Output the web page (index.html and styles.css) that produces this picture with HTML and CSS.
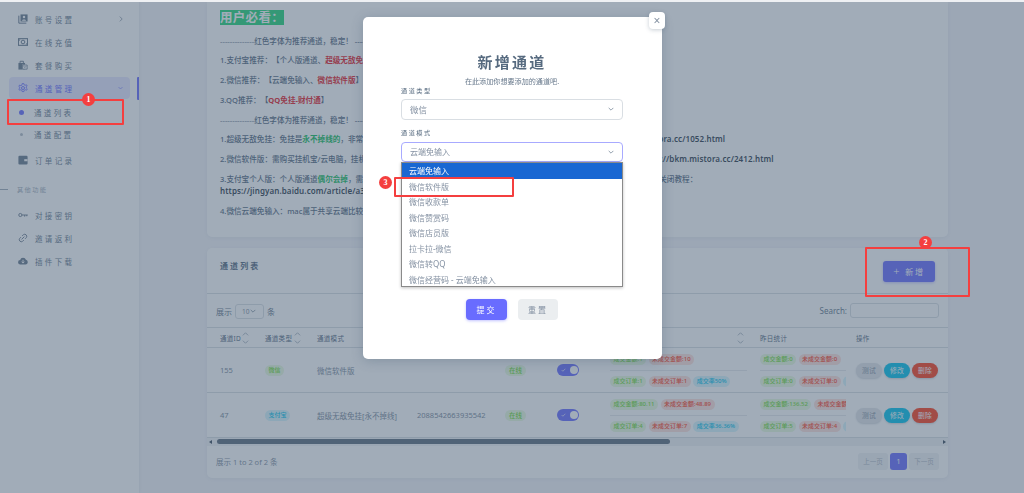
FILE: index.html
```html
<!DOCTYPE html>
<html lang="zh-CN">
<head>
<meta charset="utf-8">
<title>通道列表</title>
<link rel="stylesheet" href="styles.css">
</head>
<body>
<svg class="defs" width="0" height="0" aria-hidden="true">
  <symbol id="chev" viewBox="0 0 10 6"><path d="M1 1l4 4 4-4" fill="none" stroke="currentColor" stroke-width="1.2"/></symbol>
  <symbol id="sort" viewBox="0 0 8 16"><path d="M1 5l3-3 3 3M1 11l3 3 3-3" fill="none" stroke="currentColor" stroke-width="1"/></symbol>
</svg>
<div class="page">
  <div class="shell">
    <aside class="side">
      <a class="item">
        <svg class="ico" viewBox="0 0 12 12"><path d="M1 2v9h9" fill="none" stroke="currentColor" stroke-width="1.2"/><path d="M3 0.5h8.500v8.500H3z" fill="currentColor"/><circle cx="7.200" cy="3.600" r="1.500" fill="#fff"/><path d="M4.800 8c0-1.800 4.800-1.800 4.800 0z" fill="#fff"/></svg>
        <span class="lbl">账号设置</span>
        <svg class="arrow" viewBox="0 0 6 10"><path d="M1 1l4 4-4 4" fill="none" stroke="currentColor" stroke-width="1.100"/></svg>
      </a>
      <a class="item">
        <svg class="ico" viewBox="0 0 12 12"><rect x="0.500" y="2" width="11" height="8" fill="none" stroke="currentColor" stroke-width="1.300"/><circle cx="6" cy="6" r="2.200" fill="none" stroke="currentColor" stroke-width="1.200"/><path d="M1 3h2L1 5zM11 9H9l2-2z" fill="currentColor"/></svg>
        <span class="lbl">在线充值</span>
      </a>
      <a class="item">
        <svg class="ico" viewBox="0 0 12 12"><path d="M0.500 3.500h8v8h-8z" fill="currentColor"/><path d="M2.500 3.500V1.500h4v2" fill="none" stroke="currentColor" stroke-width="1.100"/><path d="M5 5.500h6.500v6H5z" fill="#fff"/><path d="M5.500 6h5.500v5H5.500zM7 7.500l1.200 1.500 1.500-1.500" fill="none" stroke="currentColor" stroke-width="0.900"/></svg>
        <span class="lbl">套餐购买</span>
      </a>
      <a class="item active">
        <svg class="ico" viewBox="0 0 12 12"><circle cx="6" cy="6" r="1.800" fill="none" stroke="currentColor" stroke-width="1.100"/><path d="M5 0.700h2l.3 1.500 1.300.6 1.400-.8 1 1.700-1.200 1 .1 1.400 1.200 1-1 1.700-1.400-.8-1.300.8-.3 1.500H5l-.3-1.500-1.300-.8-1.400.8-1-1.700 1.200-1V5.100l-1.200-1 1-1.700 1.400.8 1.300-.6z" fill="none" stroke="currentColor" stroke-width="1"/></svg>
        <span class="lbl">通道管理</span>
        <svg class="arrow down" viewBox="0 0 10 6"><path d="M1 1l4 4 4-4" fill="none" stroke="currentColor" stroke-width="1.100"/></svg>
      </a>
      <a class="sub on"><i class="dot"></i><span class="lbl">通道列表</span></a>
      <a class="sub"><i class="dot"></i><span class="lbl">通道配置</span></a>
      <a class="item order">
        <svg class="ico" viewBox="0 0 12 12"><rect x="0.500" y="1" width="11" height="10.500" rx="1.300" fill="currentColor"/><rect x="7.500" y="5" width="4" height="2.500" fill="#fff"/></svg>
        <span class="lbl">订单记录</span>
      </a>
      <div class="section"><i class="rule"></i><span>其他功能</span></div>
      <a class="item">
        <svg class="ico" viewBox="0 0 12 12"><circle cx="2.800" cy="6" r="1.900" fill="none" stroke="currentColor" stroke-width="1.100"/><path d="M4.700 6h7M8 6v2M10.500 6v1.500" fill="none" stroke="currentColor" stroke-width="1.100"/></svg>
        <span class="lbl">对接密钥</span>
      </a>
      <a class="item">
        <svg class="ico" viewBox="0 0 12 12"><path d="M5 3.500l1.500-1.500a2.500 2.500 0 0 1 3.500 3.500L8.500 7M7 8.500L5.500 10A2.500 2.500 0 0 1 2 6.500L3.500 5M4.300 7.700l3.400-3.400" fill="none" stroke="currentColor" stroke-width="1.100"/></svg>
        <span class="lbl">邀请返利</span>
      </a>
      <a class="item">
        <svg class="ico" viewBox="0 0 12 12"><path d="M3 10.300a2.700 2.700 0 0 1-.4-5.400 3.600 3.600 0 0 1 6.900-.3A2.900 2.900 0 0 1 9 10.300z" fill="currentColor"/><path d="M6 4.500v3.800M4.300 6.800L6 8.500l1.700-1.700" fill="none" stroke="#fff" stroke-width="1.100"/></svg>
        <span class="lbl">插件下载</span>
      </a>
    </aside>
    <i class="side-mark"></i>

    <main class="main">
      <section class="card notice">
        <h2 class="must"><span>用户必看：</span></h2>
        <p class="note"><span class="dash">--------------</span>红色字体为推荐通道，稳定！ --------------</p>
        <p class="note">1.支付宝推荐：【个人版通道、<b class="red">超级无敌免挂</b>】</p>
        <p class="note">2.微信推荐：【云端免输入、<b class="red">微信软件版</b>】</p>
        <p class="note">3.QQ推荐：【<b class="red">QQ免挂-财付通</b>】</p>
        <p class="note"><span class="dash">--------------</span>红色字体为推荐通道，稳定！ --------------</p>
        <p class="note">1.超级无敌免挂：免挂是<b class="green">永不掉线的</b>，非常稳定，推荐优先使用，掉线后也无需重新登录，配置教程请看这里：<b class="url">https://bkm.mistora.cc/1052.html</b></p>
        <p class="note">2.微信软件版：需购买挂机宝/云电脑，挂机软件长期在线运行，收款回调速度快且稳定，适合大量订单，配置教程请看这里：<b class="url">https://bkm.mistora.cc/2412.html</b></p>
        <p class="note tight">3.支付宝个人版：个人版通道<b class="green">偶尔会掉</b>，需要关闭支付宝的相关安全设置，防止掉线，如遇到掉线请重新登录账号后再试一次即可，关闭教程：<br><b class="url">https://jingyan.baidu.com/article/a3</b></p>
        <p class="note">4.微信云端免输入：mac属于共享云端比较稳定</p>
      </section>

      <section class="card list">
        <header class="list-head">
          <h3>通道列表</h3>
          <button class="btn-add"><span class="plus">+</span> 新增</button>
        </header>
        <div class="filters">
          <div class="len"><span>展示</span><span class="len-sel">10<svg class="chev" viewBox="0 0 10 6"><use href="#chev"/></svg></span><span>条</span></div>
          <div class="search"><span>Search:</span><i class="search-box"></i></div>
        </div>
        <div class="tbl-wrap">
          <table class="tbl">
            <colgroup>
              <col class="c1"><col class="c2"><col class="c3"><col class="c4"><col class="c5"><col class="c6"><col class="c7"><col class="c8"><col class="c9">
            </colgroup>
            <thead>
              <tr>
                <th>通道ID<svg class="sort" viewBox="0 0 8 16"><use href="#sort"/></svg></th>
                <th>通道类型<svg class="sort" viewBox="0 0 8 16"><use href="#sort"/></svg></th>
                <th>通道模式</th>
                <th></th>
                <th></th>
                <th></th>
                <th class="sorted"><svg class="sort" viewBox="0 0 8 16"><use href="#sort"/></svg></th>
                <th>昨日统计</th>
                <th>操作</th>
              </tr>
            </thead>
            <tbody>
              <tr>
                <td>155</td>
                <td><span class="tag g">微信</span></td>
                <td>微信软件版</td>
                <td></td>
                <td><span class="tag g wide">在线</span></td>
                <td><span class="switch"><svg viewBox="0 0 8 6"><path d="M1 3l2 2 4-4" fill="none" stroke="currentColor" stroke-width="1"/></svg><i></i></span></td>
                <td class="stats">
                  <div class="sline"><span class="tag g">成交金额:1</span><span class="tag r">未成交金额:10</span></div>
                  <div class="sline"><span class="tag g">成交订单:1</span><span class="tag r">未成交订单:1</span><span class="tag b">成交率50%</span></div>
                </td>
                <td class="stats">
                  <div class="sline"><span class="tag g">成交金额:0</span><span class="tag r">未成交金额:0</span></div>
                  <div class="sline"><span class="tag g">成交订单:0</span><span class="tag r">未成交订单:0</span><span class="tag b">成交率0%</span></div>
                </td>
                <td class="ops"><span class="op t">测试</span><span class="op e">修改</span><span class="op d">删除</span></td>
              </tr>
              <tr>
                <td>47</td>
                <td><span class="tag b">支付宝</span></td>
                <td class="nowrap">超级无敌免挂[永不掉线]</td>
                <td>2088542663935542</td>
                <td><span class="tag g wide">在线</span></td>
                <td><span class="switch"><svg viewBox="0 0 8 6"><path d="M1 3l2 2 4-4" fill="none" stroke="currentColor" stroke-width="1"/></svg><i></i></span></td>
                <td class="stats">
                  <div class="sline"><span class="tag g">成交金额:80.11</span><span class="tag r">未成交金额:48.89</span></div>
                  <div class="sline"><span class="tag g">成交订单:4</span><span class="tag r">未成交订单:7</span><span class="tag b">成交率36.36%</span></div>
                </td>
                <td class="stats">
                  <div class="sline"><span class="tag g">成交金额:136.52</span><span class="tag r">未成交金额:33.48</span></div>
                  <div class="sline"><span class="tag g">成交订单:5</span><span class="tag r">未成交订单:4</span><span class="tag b">成交率55%</span></div>
                </td>
                <td class="ops"><span class="op t">测试</span><span class="op e">修改</span><span class="op d">删除</span></td>
              </tr>
            </tbody>
          </table>
          <div class="scroll"><i class="sl"></i><i class="thumb"></i><i class="sr"></i></div>
        </div>
        <footer class="list-foot">
          <span>展示 1 to 2 of 2 条</span>
          <div class="pager"><span class="pg">上一页</span><span class="pg cur">1</span><span class="pg">下一页</span></div>
        </footer>
      </section>
    </main>
  </div>

  <div class="backdrop"></div>

  <div class="modal">
    <button class="close">×</button>
    <h1 class="m-title">新增通道</h1>
    <p class="m-sub">在此添加你想要添加的通道吧.</p>
    <label class="m-label first">通道类型</label>
    <div class="sel"><span class="sel-one">微信</span><svg class="chev" viewBox="0 0 10 6"><use href="#chev"/></svg></div>
    <label class="m-label second">通道模式</label>
    <div class="field">
      <div class="sel focus"><span>云端免输入</span><svg class="chev" viewBox="0 0 10 6"><use href="#chev"/></svg></div>
      <ul class="drop">
        <li class="hl">云端免输入</li>
        <li>微信软件版</li>
        <li>微信收款单</li>
        <li>微信赞赏码</li>
        <li>微信店员版</li>
        <li>拉卡拉-微信</li>
        <li>微信转QQ</li>
        <li>微信经营码 - 云端免输入</li>
      </ul>
    </div>
    <div class="m-actions">
      <button class="m-btn ok">提交</button>
      <button class="m-btn reset">重置</button>
    </div>
  </div>

  <i class="mark m1"></i><b class="pin p1">1</b>
  <i class="mark m2"></i><b class="pin p2">2</b>
  <i class="mark m3"></i><b class="pin p3">3</b>
</div>
</body>
</html>
```

FILE: styles.css
```css
* { box-sizing: border-box; }
html, body { margin: 0; height: 100%; overflow: hidden; background: #eef0f3; }
body { font-family: "Noto Sans", "Noto Sans CJK SC", sans-serif; font-size: 8px; color: #697a8d; text-spacing-trim: space-all; }
.defs { position: absolute; }
h1, h2, h3, p, ul { margin: 0; padding: 0; }
a { display: flex; }
button { font-family: inherit; border: 0; padding: 0; }

.page { position: relative; height: 493px; width: 1024px; padding-top: 2px; overflow: hidden; filter: blur(0.45px); }
.shell { display: flex; height: 491px; background: #f5f5f9; overflow: hidden; position: relative; }

/* sidebar */
.side { width: 139px; flex: none; background: #fff; padding-top: 6px; box-shadow: 0 0 4px rgba(67,89,113,.1); }
.side-mark { position: absolute; left: 137px; top: 75px; width: 2px; height: 23px; background: #696cff; border-radius: 1px 0 0 1px; }
.item { align-items: center; height: 22px; margin: 0 9px 1px; padding-left: 9px; border-radius: 4px; position: relative; color: #697a8d; }
.ico { width: 10px; height: 10px; flex: none; margin-right: 7px; }
.lbl { font-size: 7.5px; letter-spacing: 2.35px; white-space: nowrap; }
.arrow { position: absolute; right: 7px; width: 4px; height: 6px; }
.arrow.down { width: 5px; height: 4px; }
.active { background: rgba(105,108,255,.16); color: #696cff; }
.sub { align-items: center; height: 22px; margin: 0 9px; padding-left: 11px; color: #697a8d; }
.dot { width: 3px; height: 3px; border-radius: 50%; background: #b4bdc6; margin-right: 11px; flex: none; }
.sub.on .dot { width: 5px; height: 5px; margin: 0 10px 0 -1px; background: #696cff; }
.item.active + .sub { margin-top: 2px; }
.order { margin-top: 4px; }
.section { display: flex; align-items: center; height: 12px; margin: 12px 0 9px; font-size: 6.2px; letter-spacing: 1.4px; color: #a1acb8; }
.rule { width: 8px; height: 1px; background: #a1acb8; margin-right: 9px; }

/* main */
.main { flex: 1; padding: 0 76px 0 68px; }
.card { background: #fff; border-radius: 0 0 5px 5px; box-shadow: 0 1px 4px rgba(67,89,113,.08); }
.notice { height: 235px; padding: 8px 13px 0; margin-bottom: 11px; }
.must { height: 15px; font-size: 12.5px; line-height: 15px; margin-bottom: 9.5px; font-weight: 700; }
.must span { display: inline-block; background: #24d67a; color: #fff; width: 64px; letter-spacing: .3px; white-space: nowrap; }
.note { font-size: 7.6px; line-height: 12px; height: 12px; margin-bottom: 7.75px; white-space: nowrap; color: #566a7f; font-weight: 500; }
.note.tight { height: 24px; }
.note .dash { color: #8592a3; }
.red { color: #e8202a; font-weight: 700; }
.green { color: #16c060; font-weight: 700; }
.url { color: #2f3d4d; font-weight: 600; font-size: 8px; letter-spacing: .1px; }

/* list */
.list { height: 230px; border-radius: 5px; display: flex; flex-direction: column; }
.list-head { height: 46px; display: flex; align-items: flex-start; justify-content: space-between; padding: 13px 13px 0; border-bottom: 1px solid #d9dee3; }
.list-head h3 { font-size: 8px; line-height: 10px; margin-top: 0; letter-spacing: 2.1px; font-weight: 700; color: #566a7f; }
.btn-add { width: 52px; height: 21px; background: #696cff; color: #fff; border-radius: 3px; font-size: 8px; letter-spacing: 1.8px; box-shadow: 0 1px 3px rgba(105,108,255,.4); }
.plus { font-size: 11px; line-height: 8px; font-weight: 300; }
.filters { height: 33px; display: flex; align-items: center; justify-content: space-between; padding: 0 9px; font-size: 8px; }
.len, .search { display: flex; align-items: center; gap: 3px; }
.len { margin-top: 1px; }
.len-sel { width: 29px; height: 15px; border: 1px solid #d9dee3; border-radius: 3px; padding-left: 6px; display: flex; align-items: center; gap: 1px; font-size: 6.500px; color: #8592a3; }
.len-sel .chev { width: 6px; height: 4px; }
.search-box { width: 89px; height: 15px; border: 1px solid #d9dee3; border-radius: 3px; }
.tbl-wrap { flex: none; }
.tbl { width: 741px; table-layout: fixed; border-collapse: collapse; font-size: 7.500px; }
.c1 { width: 45px; } .c2 { width: 52px; } .c3 { width: 100px; } .c4 { width: 88px; } .c5 { width: 52px; }
.c6 { width: 53px; } .c7 { width: 150px; } .c8 { width: 99px; } .c9 { width: 102px; }
.tbl th { height: 20px; text-align: left; font-weight: 400; font-size: 6.500px; letter-spacing: .3px; padding: 0 0 0 13px; border-top: 1px solid #d9dee3; border-bottom: 1px solid #d9dee3; position: relative; color: #566a7f; }
.tbl th:last-child { padding-left: 10px; }
.sort { position: absolute; right: 3px; top: 3px; width: 7px; height: 14px; color: #a1acb8; }
.tbl td { height: 44.500px; padding: 0 0 0 13px; border-bottom: 1px solid #d9dee3; vertical-align: middle; white-space: nowrap; overflow: hidden; color: #7c8b9c; }
.nowrap { overflow: hidden; }
.tag { display: inline-block; height: 11px; line-height: 11px; padding: 0 3.500px; border-radius: 6px; font-size: 6px; margin-right: 3px; white-space: nowrap; font-weight: 500; }
.tag.wide { padding: 0 4px; margin: 0; font-size: 6.500px; }
.g { background: #e8fadf; color: #71dd37; }
.r { background: #ffe0db; color: #ff3e1d; }
.b { background: #d7f5fc; color: #03c3ec; }
.switch { display: flex; align-items: center; justify-content: space-between; width: 22px; height: 12px; border-radius: 6px; background: #696cff; padding: 0 1.500px 0 4px; color: #fff; }
.switch svg { width: 5px; height: 4px; }
.switch i { width: 8px; height: 8px; border-radius: 50%; background: #fff; }
.tbl td.stats { padding: 0 0 0 13px; }
.sline { height: 22px; display: flex; align-items: center; overflow: hidden; }
.sline + .sline { border-top: 1px solid #e6e9ec; }
.stats:nth-child(7) .sline { width: 137px; }
.stats:nth-child(8) .sline { width: 86px; }
.stats .tag { flex: none; margin-right: 2.500px; }
.ops { padding-left: 10px !important; }
.op { display: inline-block; width: 26px; height: 15px; line-height: 15px; text-align: center; border-radius: 8px; margin-right: 2px; font-size: 6.800px; letter-spacing: .3px; box-shadow: 0 1px 2px rgba(67,89,113,.25); }
.op.t { background: #e3e5e9; color: #8592a3; }
.op.e { background: #03c3ec; color: #fff; }
.op.d { background: #ff3e1d; color: #fff; }
.scroll { height: 8px; position: relative; background: #f1f2f4; }
.thumb { position: absolute; left: 10px; top: 1px; width: 453px; height: 5px; border-radius: 3px; background: #2b3f55; opacity: .75; }
.sl, .sr { position: absolute; top: 1.500px; width: 0; height: 0; border: 2px solid transparent; }
.sl { left: 2px; border-right: 3px solid #3d4d5f; border-left: 0; }
.sr { right: 2px; border-left: 3px solid #3d4d5f; border-right: 0; }
.list-foot { flex: 1; display: flex; align-items: center; justify-content: space-between; padding: 0 9px 0 9px; color: #8592a3; font-size: 7.500px; margin-top: -2px; }
.pager { display: flex; gap: 2px; margin-top: 1px; }
.pg { width: 30px; height: 17px; line-height: 17px; text-align: center; background: #f0f2f4; border-radius: 3px; font-size: 6.500px; color: #b0b9c4; }
.pg.cur { width: 17px; background: #696cff; color: #fff; font-size: 7px; }

/* overlay + modal */
.backdrop { position: absolute; left: 0; right: 0; top: 2px; bottom: 0; background: #435971; opacity: .5; }
.modal { position: absolute; left: 363px; top: 17px; width: 299px; height: 342px; background: #fff; border-radius: 5px; padding: 36px 39px 0 38px; box-shadow: 0 2px 12px rgba(67,89,113,.3); }
.close { position: absolute; right: -3px; top: -5px; width: 16px; height: 17px; background: #fff; border-radius: 4px; color: #8592a3; font-size: 12px; line-height: 15px; box-shadow: 0 1px 4px rgba(67,89,113,.3); }
.m-title { height: 18px; line-height: 18px; text-align: center; font-size: 15px; letter-spacing: 2.200px; color: #566a7f; font-weight: 700; }
.m-sub { height: 10px; line-height: 10px; margin-top: 5px; text-align: center; font-size: 7.100px; color: #697a8d; }
.m-label { display: block; height: 8px; line-height: 8px; font-size: 6.200px; letter-spacing: 1.500px; color: #566a7f; }
.m-label.first { margin-top: 1px; }
.m-label.second { margin-top: 9px; }
.sel { height: 21px; margin-top: 4px; border: 1px solid #d9dee3; border-radius: 4px; display: flex; align-items: center; justify-content: space-between; padding: 0 8px 1px; font-size: 8px; color: #8592a3; }
.sel-one { font-size: 8.500px; }
.chev { width: 6px; height: 4px; color: #697a8d; }
.field { position: relative; margin-top: 5px; }
.sel.focus { margin-top: 0; height: 20px; border-color: #a8aaff; }
.drop { position: absolute; left: 0; right: 0; top: 20px; height: 125px; list-style: none; background: #fff; border: 1px solid #8a8a8a; box-shadow: 0 1px 3px rgba(0,0,0,.25); }
.drop li { height: 15.500px; line-height: 15.500px; padding-left: 7px; font-size: 8px; color: #8592a3; white-space: nowrap; }
.drop .hl { background: #1967d2; color: #fff; }
.m-actions { margin-top: 137px; display: flex; gap: 11px; padding-left: 65px; }
.m-btn { width: 41px; height: 21px; border-radius: 4px; font-size: 8px; letter-spacing: 2px; }
.ok { background: #696cff; color: #fff; box-shadow: 0 1px 3px rgba(105,108,255,.4); }
.reset { background: #ebeef0; color: #8592a3; width: 40px; }

/* annotations */
.mark { position: absolute; border: 2px solid #f43f3f; border-radius: 1px; }
.m1 { left: 7px; top: 99px; width: 117px; height: 26px; }
.m2 { left: 865px; top: 247px; width: 105px; height: 50px; }
.m3 { left: 394px; top: 177px; width: 120px; height: 20px; }
.pin { position: absolute; width: 13px; height: 13px; border-radius: 50%; background: #f43f3f; color: #fff; font: 700 8px/13px "Liberation Serif", serif; text-align: center; }
.p1 { left: 82px; top: 93px; }
.p2 { left: 919px; top: 236px; }
.p3 { left: 379px; top: 176px; }
```
